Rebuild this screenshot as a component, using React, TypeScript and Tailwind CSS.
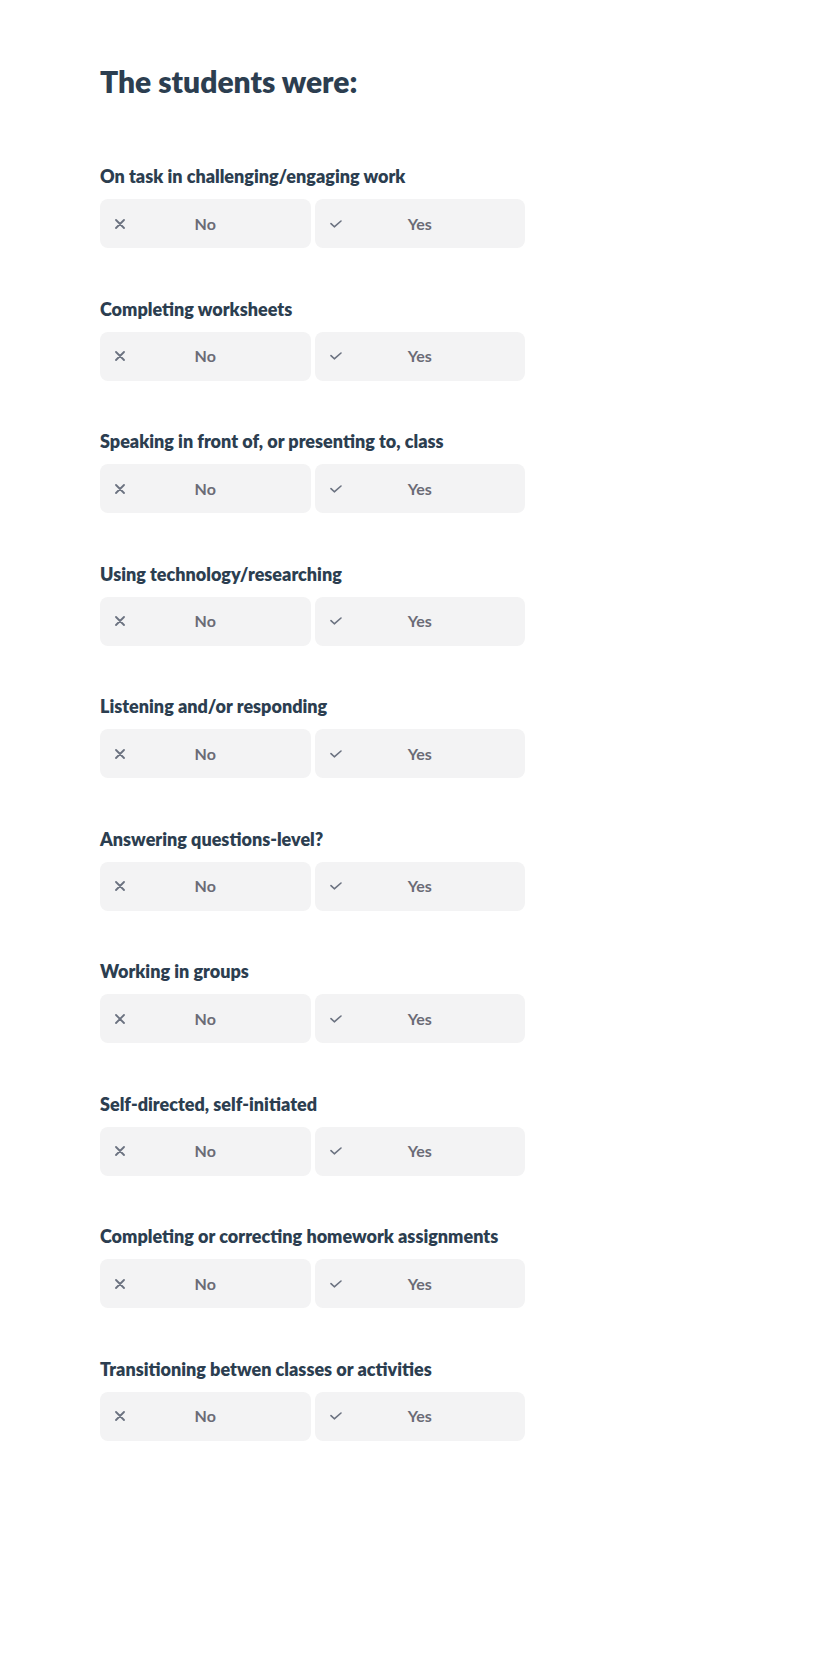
import React from "react";

const questions = [
  "On task in challenging/engaging work",
  "Completing worksheets",
  "Speaking in front of, or presenting to, class",
  "Using technology/researching",
  "Listening and/or responding",
  "Answering questions-level?",
  "Working in groups",
  "Self-directed, self-initiated",
  "Completing or correcting homework assignments",
  "Transitioning betwen classes or activities",
];

const XIcon = () => (
  <svg width="10" height="10" viewBox="0 0 10 10" className="shrink-0">
    <path d="M1 1 9 9M9 1 1 9" stroke="#6b7280" strokeWidth="1.8" strokeLinecap="round" fill="none" />
  </svg>
);

const CheckIcon = () => (
  <svg width="12" height="8" viewBox="0 0 12 8" className="shrink-0">
    <path d="M1 3.6 4.3 6.8 11 1" stroke="#6b7280" strokeWidth="1.6" strokeLinecap="round" strokeLinejoin="round" fill="none" />
  </svg>
);

const Choice = ({ icon, label }: { icon: React.ReactNode; label: string }) => (
  <button className="relative flex h-[49px] items-center justify-center rounded-lg bg-[#f3f3f4] text-[16px] font-bold text-[#6b6b76]">
    <span className="absolute left-[15px] top-1/2 flex -translate-y-1/2 items-center">{icon}</span>
    <span>{label}</span>
  </button>
);

export default function App() {
  return (
    <div className="min-h-[1680px] bg-white pl-[100px] pt-[61px] font-['Lato',sans-serif]">
      <h1 className="mb-[63px] text-[30px] font-extrabold leading-[40px] text-[#2c3e50]">The students were:</h1>
      <div className="flex flex-col gap-[48.5px]">
        {questions.map((q) => (
          <div key={q} className="w-[425px]">
            <p className="mb-[11px] text-[18px] font-extrabold leading-[24px] text-[#2c3e50]">{q}</p>
            <div className="grid grid-cols-2 gap-[4px]">
              <Choice icon={<XIcon />} label="No" />
              <Choice icon={<CheckIcon />} label="Yes" />
            </div>
          </div>
        ))}
      </div>
    </div>
  );
}
